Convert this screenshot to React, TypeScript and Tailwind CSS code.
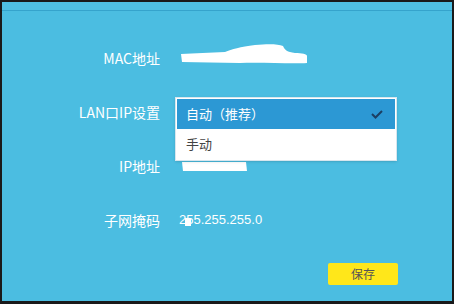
import React from "react";

const font = { fontFamily: '"Noto Sans CJK SC", "Liberation Sans", sans-serif' };

function Label({ children }: { children: React.ReactNode }) {
  return (
    <div className="w-[158px] shrink-0 text-right text-[14px] text-white leading-[30px]">{children}</div>
  );
}

export default function App() {
  return (
    <div className="w-[454px] h-[304px] bg-[#1a1a1a] pl-[2px] pt-[2px] pr-[2px] pb-[3px]" style={font}>
      <div className="w-full h-full bg-[#4bbde1] flex flex-col">
        <div className="h-[9px] bg-[#4fc0e3] border-b border-[#35a3cc] shrink-0" />
        <div className="flex flex-col gap-[24px] pt-[32px]">
          {/* MAC */}
          <div className="flex items-center h-[30px]">
            <Label>MAC地址</Label>
            <div className="ml-[20px] h-[30px]">
              <svg width="130" height="30" viewBox="0 0 130 30">
                <path
                  d="M1 11 C15 10 30 10 45 9 C52 6 60 4 75 2 C88 1 98 1 103 3 C105 7 107 9 115 10 C122 10 127 11 127 13 L127 20 C110 21 80 19 60 20 C40 20 20 19 2 19 Z"
                  fill="#ffffff"
                />
              </svg>
            </div>
          </div>
          {/* LAN IP */}
          <div className="flex items-center h-[30px] relative">
            <Label>LAN口IP设置</Label>
            <div className="absolute left-[173px] top-[0px] w-[222px] h-[64px] bg-white border border-[#d8e6ee] p-[1px] z-10 shadow-sm">
              <div className="h-[30px] bg-[#2c98d4] flex items-center justify-between pl-[9px] pr-[12px] text-white text-[13px]">
                <span>自动（推荐）</span>
                <svg width="12" height="9" viewBox="0 0 12 9">
                  <path d="M1 4 L4.5 7.5 L11 1" stroke="#1c3f63" strokeWidth="2" fill="none" />
                </svg>
              </div>
              <div className="h-[29px] flex items-center pl-[9px] text-[#444] text-[13px]">手动</div>
            </div>
          </div>
          {/* IP */}
          <div className="flex items-center h-[30px]">
            <Label>IP地址</Label>
            <div className="ml-[20px] h-[30px] flex items-center">
              <svg width="70" height="14" viewBox="0 0 70 14">
                <path d="M2 3 L66 3 L67 12 L3 12 Z" fill="#ffffff" />
              </svg>
            </div>
          </div>
          {/* Subnet */}
          <div className="flex items-center h-[30px]">
            <Label>子网掩码</Label>
            <div className="ml-[19px] relative text-white text-[13px] leading-[30px]" style={{ fontFamily: '"Liberation Sans", sans-serif' }}>
              255.255.255.0
              <div className="absolute left-[6px] top-[13px] w-[6px] h-[8px] bg-white" />
            </div>
          </div>
        </div>
        <div className="flex justify-end pr-[54px] mt-[28px]">
          <button className="w-[70px] h-[22px] bg-[#ffe71a] rounded-[2px] text-[12px] text-[#555] flex items-center justify-center">
            保存
          </button>
        </div>
      </div>
    </div>
  );
}
